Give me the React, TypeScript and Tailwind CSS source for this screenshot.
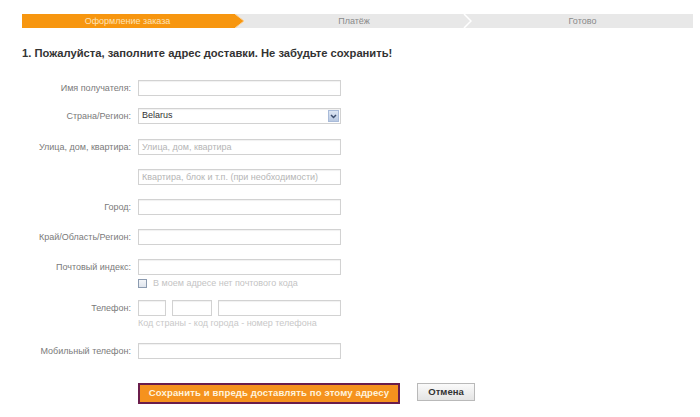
import React from "react";

const inputCls = "h-[16px] border border-[#d2d2d2] bg-white shadow-[inset_0_1px_1px_rgba(0,0,0,0.06)]";

function Row({ label, mt, children }: { label: string; mt: string; children: React.ReactNode }) {
  return (
    <div className={`flex items-start ${mt}`}>
      <div className="w-[138px] pr-[7px] text-right text-[9px] leading-[16px] text-[#7a7a7a]">{label}</div>
      <div className="flex flex-col">{children}</div>
    </div>
  );
}

export default function App() {
  return (
    <div className="w-[700px] h-[417px] bg-white overflow-hidden" style={{ fontFamily: '"Liberation Sans", Arial, sans-serif' }}>
      {/* Steps */}
      <div className="flex ml-[22px] mt-[14px] w-[671px] h-[14px] bg-[#e8e8e8] text-[9px] leading-[14px]">
        <div className="w-[211px] bg-[#f7960f] text-center text-[#fde3b8]">Оформление заказа</div>
        <svg width="12" height="14" viewBox="0 0 12 14" className="block">
          <polygon points="0,0 2,0 11,7 2,14 0,14" fill="#f7960f" />
          <polyline points="2,0 11,7 2,14" fill="none" stroke="#fbd29a" strokeWidth="1" />
        </svg>
        <div className="w-[218px] text-center text-[#8a8a8a]">Платёж</div>
        <svg width="9" height="14" viewBox="0 0 9 14" className="block">
          <polyline points="1,0 8,7 1,14" fill="none" stroke="#ffffff" strokeWidth="1.5" />
        </svg>
        <div className="flex-1 text-center text-[#8a8a8a]">Готово</div>
      </div>

      {/* Heading */}
      <div className="ml-[22px] mt-[18px] text-[11.2px] font-bold leading-[14px] text-[#333]">
        1. Пожалуйста, заполните адрес доставки. Не забудьте сохранить!
      </div>

      {/* Form */}
      <div className="mt-[20px]">
        <Row label="Имя получателя:" mt="mt-0">
          <div className={`${inputCls} w-[203px]`} />
        </Row>
        <Row label="Страна/Регион:" mt="mt-[12px]">
          <div className={`${inputCls} w-[203px] flex items-center justify-between pl-[3px] pr-[1px]`}>
            <span className="text-[9px] text-[#333]">Belarus</span>
            <div className="w-[11px] h-[12px] bg-gradient-to-b from-[#dde6f3] to-[#b9c9e2] border border-[#a9bbd9] flex items-center justify-center">
              <svg width="7" height="5" viewBox="0 0 7 5">
                <polyline points="1,1 3.5,3.5 6,1" fill="none" stroke="#3d4e6e" strokeWidth="1.5" />
              </svg>
            </div>
          </div>
        </Row>
        <Row label="Улица, дом, квартира:" mt="mt-[15px]">
          <div className={`${inputCls} w-[203px] pl-[3px] text-[9px] leading-[14px] text-[#b5b5b5]`}>Улица, дом, квартира</div>
        </Row>
        <Row label="" mt="mt-[14px]">
          <div className={`${inputCls} w-[203px] pl-[3px] text-[9px] leading-[14px] text-[#b5b5b5]`}>Квартира, блок и т.п. (при необходимости)</div>
        </Row>
        <Row label="Город:" mt="mt-[14px]">
          <div className={`${inputCls} w-[203px]`} />
        </Row>
        <Row label="Край/Область/Регион:" mt="mt-[14px]">
          <div className={`${inputCls} w-[203px]`} />
        </Row>
        <Row label="Почтовый индекс:" mt="mt-[14px]">
          <div className={`${inputCls} w-[203px]`} />
          <div className="flex items-center mt-[3px] h-[10px]">
            <div className="w-[9px] h-[9px] border border-[#8c9bb0] bg-gradient-to-b from-[#f4f6f9] to-[#dfe4ec]" />
            <span className="ml-[6px] text-[9px] leading-[10px] text-[#c4c4c4]">В моем адресе нет почтового кода</span>
          </div>
        </Row>
        <Row label="Телефон:" mt="mt-[12px]">
          <div className="flex gap-[6px]">
            <div className={`${inputCls} w-[28px]`} />
            <div className={`${inputCls} w-[40px]`} />
            <div className={`${inputCls} w-[123px]`} />
          </div>
          <div className="mt-[2px] text-[9px] leading-[10px] text-[#c8c8c8]">Код страны - код города - номер телефона</div>
        </Row>
        <Row label="Мобильный телефон:" mt="mt-[15px]">
          <div className={`${inputCls} w-[203px]`} />
        </Row>

        {/* Buttons */}
        <div className="flex items-start ml-[138px] mt-[24px]">
          <div className="w-[262px] h-[21px] border-2 border-[#6a1d4b] bg-[#f5921e] flex items-center justify-center whitespace-nowrap text-[9.6px] font-bold tracking-[0.1px] text-[#fff3dc]">
            Сохранить и впредь доставлять по этому адресу
          </div>
          <div className="ml-[17px] w-[58px] h-[18px] border border-[#b9b9b9] bg-gradient-to-b from-[#fafafa] to-[#e4e4e4] flex items-center justify-center text-[9.5px] font-bold text-[#333]">
            Отмена
          </div>
        </div>
      </div>
    </div>
  );
}
